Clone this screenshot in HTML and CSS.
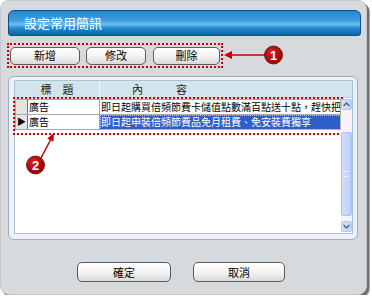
FILE: index.html
```html
<!DOCTYPE html>
<html lang="zh-Hant">
<head>
    <meta charset="UTF-8">
    <title>設定常用簡訊</title>
    <link rel="stylesheet" href="styles.css">
</head>
<body>
    <div class="dialog">
        <div class="titlebar">設定常用簡訊</div>

        <div class="toolbar">
            <button class="btn btn-add">新增</button>
            <button class="btn btn-edit">修改</button>
            <button class="btn btn-del">刪除</button>
        </div>

        <div class="list-panel">
            <div class="grid">
                <div class="grid-head">
                    <div class="head-title">標　題</div>
                    <div class="head-content">內　　　容</div>
                </div>
                <div class="grid-main">
                    <div class="rows">
                        <div class="annotated">
                            <table class="msg-table">
                                <colgroup>
                                    <col class="col-sel">
                                    <col class="col-title">
                                    <col>
                                </colgroup>
                                <tr>
                                    <td class="sel"></td>
                                    <td>廣告</td>
                                    <td>即日起購買倍頻節費卡儲值點數滿百點送十點，趕快把握</td>
                                </tr>
                                <tr>
                                    <td class="sel current">&#9654;</td>
                                    <td>廣告</td>
                                    <td class="selected">即日起申裝倍頻節費品免月租費、免安裝費獨享</td>
                                </tr>
                            </table>
                        </div>
                    </div>
                    <div class="scrollbar">
                        <div class="sb-btn">
                            <svg width="7" height="5" viewBox="0 0 7 5"><path d="M0.5 4 L3.5 1 L6.5 4" fill="none" stroke="#4d6185" stroke-width="1.4"/></svg>
                        </div>
                        <div class="sb-track"></div>
                        <div class="sb-thumb"><span class="grip"></span></div>
                        <div class="sb-track short"></div>
                        <div class="sb-btn">
                            <svg width="7" height="5" viewBox="0 0 7 5"><path d="M0.5 1 L3.5 4 L6.5 1" fill="none" stroke="#4d6185" stroke-width="1.4"/></svg>
                        </div>
                    </div>
                </div>
            </div>
        </div>

        <div class="footer">
            <button class="btn btn-ok">確定</button>
            <button class="btn btn-cancel">取消</button>
        </div>

        <!-- callouts -->
        <svg class="callouts" width="367" height="295" viewBox="0 0 367 295">
            <defs>
                <radialGradient id="dot" cx="0.4" cy="0.35" r="0.7">
                    <stop offset="0" stop-color="#e02020"/>
                    <stop offset="1" stop-color="#8a0000"/>
                </radialGradient>
            </defs>
            <line x1="265" y1="55" x2="230" y2="55" stroke="#c40000" stroke-width="1.5"/>
            <polygon points="224,55 232,51 232,59" fill="#c40000"/>
            <circle cx="273.5" cy="55" r="9" fill="url(#dot)" stroke="#700" stroke-width="0.8"/>
            <text x="273.5" y="59.5" class="callout-num">1</text>

            <line x1="41" y1="158" x2="51" y2="139" stroke="#c40000" stroke-width="1.5"/>
            <polygon points="54,133 53.4,141.7 47.2,138.5" fill="#c40000"/>
            <circle cx="35.5" cy="165" r="9" fill="url(#dot)" stroke="#700" stroke-width="0.8"/>
            <text x="35.5" y="169.5" class="callout-num">2</text>
        </svg>
    </div>
</body>
</html>
```

FILE: styles.css
```css
body {
    margin: 0;
    background-color: #fff;
    font-family: "Noto Sans CJK TC", "Noto Sans CJK SC", sans-serif;
    font-size: 11px;
    color: #000;
}

.dialog {
    position: relative;
    box-sizing: border-box;
    width: 367px;
    height: 295px;
    padding: 9px 5px 0 8px;
    background-color: #d6dadd;
    border: 1px solid #c4c8cc;
    border-radius: 9px;
    box-shadow: 2px 2px 0 #6b6f73, 3px 3px 0 #a4a8ac;
}

.titlebar {
    box-sizing: border-box;
    height: 26px;
    margin-left: -1px;
    padding-left: 15px;
    border: 1px solid #0c4f8e;
    border-radius: 6px 6px 3px 3px;
    background: linear-gradient(#2a86cc, #3d9ede 40%, #6cc2f0 55%, #2288d0 72%, #0e62aa);
    color: #fff;
    font-size: 13px;
    line-height: 24px;
}

.toolbar {
    display: flex;
    align-items: center;
    gap: 6px;
    box-sizing: border-box;
    width: 216px;
    height: 25px;
    margin: 7px 0 0 -2px;
    padding-left: 1px;
    border: 2px dotted #d40000;
}

.btn {
    box-sizing: border-box;
    height: 18px;
    padding: 0;
    border: 1px solid #5a5a5a;
    border-radius: 5px;
    background: linear-gradient(#ffffff, #f4f4f4 50%, #dadada);
    font-family: inherit;
    font-size: 11px;
    line-height: 15px;
    color: #000;
}

    .btn-add {
        width: 70px;
    }

    .btn-edit {
        width: 60px;
    }

    .btn-del {
        width: 67px;
        margin-left: 1px;
    }

.list-panel {
    box-sizing: border-box;
    width: 350px;
    height: 164px;
    margin: 8px 0 0 -1px;
    padding: 3px 4px 5px 5px;
    border: 1px solid #a4acb4;
    border-radius: 6px;
    background-color: #eef1f3;
}

.grid {
    display: flex;
    flex-direction: column;
    box-sizing: border-box;
    height: 100%;
    border: 1px solid #a6c6d8;
    background-color: #fff;
}

.grid-head {
    display: flex;
    height: 16px;
    line-height: 16px;
    background-color: #d4e4ed;
    border-bottom: 1px solid #bcd0dc;
    color: #222;
}

.head-title {
    width: 84px;
    text-align: center;
    border-right: 1px solid #f2f7fa;
}

.head-content {
    flex: 1;
    padding-left: 32px;
}

.grid-main {
    flex: 1;
    display: flex;
    padding-top: 1px;
}

.rows {
    flex: 1;
    min-width: 0;
}

.annotated {
    padding-bottom: 3px;
    outline: 2px dotted #d40000;
}

.msg-table {
    width: 100%;
    table-layout: fixed;
    border-collapse: collapse;
    font-size: 10px;
}

    .msg-table td {
        height: 14px;
        padding: 0 0 0 1px;
        border: 1px solid #a8a8a8;
        white-space: nowrap;
        overflow: hidden;
        line-height: 14px;
    }

.col-sel {
    width: 12px;
}

.col-title {
    width: 72px;
}

.msg-table td.sel {
    padding: 0;
    background-color: #e4e4e0;
    border-right-color: #707070;
    font-size: 9px;
    text-align: center;
}

.msg-table td.selected {
    background-color: #2f5fc6;
    color: #fff;
    outline: 1px dotted #e8c860;
    outline-offset: -1px;
}

.scrollbar {
    display: flex;
    flex-direction: column;
    width: 11px;
    margin-bottom: 1px;
    background-color: #f3f5fb;
}

.sb-btn {
    display: flex;
    align-items: center;
    justify-content: center;
    box-sizing: border-box;
    height: 11px;
    border: 1px solid #b4c6ee;
    border-radius: 2px;
    background: linear-gradient(90deg, #d6e2fc, #c2d4f8);
}

.sb-track {
    height: 22px;
}

    .sb-track.short {
        height: 5px;
    }

.sb-thumb {
    flex: 1;
    display: flex;
    align-items: center;
    justify-content: center;
    border: 1px solid #adc0ec;
    border-radius: 2px;
    background: linear-gradient(90deg, #d2defc, #bccff8);
}

.grip {
    width: 5px;
    height: 4px;
    border-top: 1px solid #eef3ff;
    border-bottom: 1px solid #eef3ff;
}

.footer {
    display: flex;
    gap: 22px;
    margin-top: 22px;
    padding-left: 68px;
}

    .footer .btn {
        height: 20px;
        line-height: 17px;
    }

.btn-ok {
    width: 94px;
}

.btn-cancel {
    width: 92px;
}

.callouts {
    position: absolute;
    top: -1px;
    left: -1px;
    pointer-events: none;
}

.callout-num {
    fill: #fff;
    font-family: "Liberation Sans", Arial, sans-serif;
    font-size: 13px;
    font-weight: bold;
    text-anchor: middle;
}
```
